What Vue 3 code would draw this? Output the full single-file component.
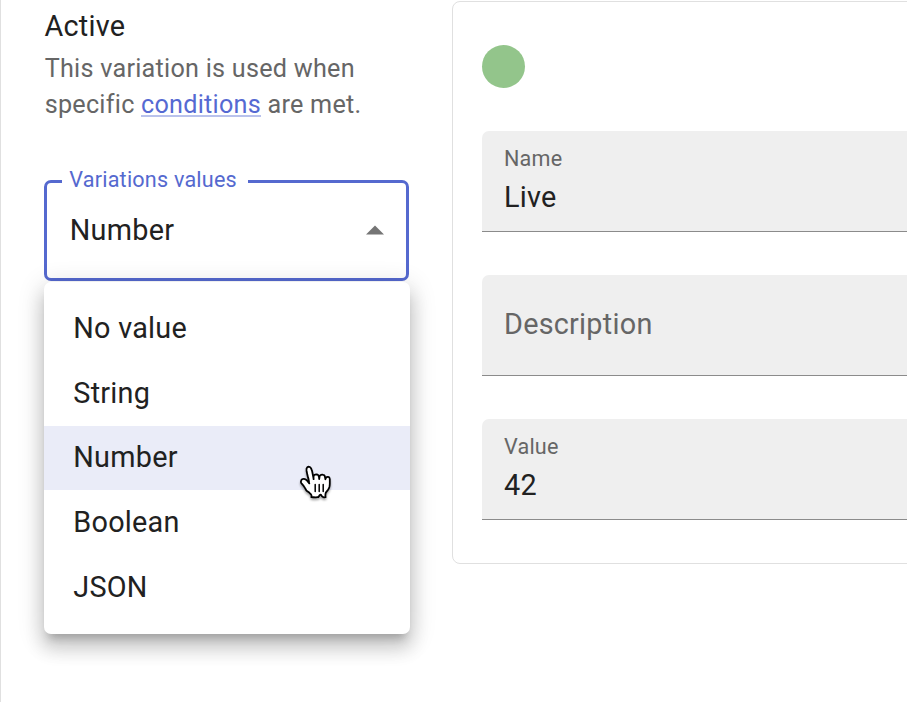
<script setup>
const options = ['No value', 'String', 'Number', 'Boolean', 'JSON']
const selected = 'Number'
</script>

<template>
  <main class="page">
    <section class="side">
      <h1>Active</h1>
      <p>This variation is used when<br />specific <a>conditions</a> are met.</p>
      <fieldset class="select">
        <legend>Variations values</legend>
        <span class="current">{{ selected }}</span>
        <svg class="arrow" width="18" height="10" viewBox="0 0 18 10"><path d="M0 9.5L9 0.5L18 9.5Z" fill="#757575" /></svg>
      </fieldset>
      <div class="menu">
        <ul>
          <li v-for="o in options" :key="o" :class="{ active: o === selected }">{{ o }}</li>
        </ul>
        <svg class="cursor" width="64" height="64" viewBox="0 0 32 32">
          <path d="M11.3 20.4c-.3-.4-.6-1.1-1.2-2c-.3-.5-1.2-1.5-1.5-1.9c-.2-.4-.2-.6-.1-1c.1-.6.7-1.1 1.4-1.1c.5 0 1 .4 1.4.7c.2.2.5.6.7.8c.2.2.2.3.4.5c.2.3.3.5.2.1c-.1-.5-.2-1.3-.4-2.1c-.1-.6-.2-.7-.3-1.1c-.1-.5-.2-.8-.3-1.3c-.1-.3-.2-1.1-.3-1.5c-.1-.5-.1-1.4.3-1.8c.3-.3.9-.4 1.3-.2c.5.3.8 1 .9 1.3c.2.5.4 1.2.5 2c.2 1 .5 2.5.5 2.8c0-.4-.1-1.1 0-1.5c.1-.3.3-.7.7-.8c.3-.1.6-.1.9-.1c.3.1.6.3.8.5c.4.6.4 1.9.4 1.8c.1-.4.1-1.2.3-1.6c.1-.2.5-.4.7-.5c.3-.1.7-.1 1 0c.2 0 .6.3.7.5c.2.3.3 1.3.4 1.7c0 .1.1-.4.3-.7c.4-.6 1.8-.8 1.9.6v2.3c0 .4-.1 1.3-.2 1.7c-.1.3-.4 1-.7 1.4c0 0-1.1 1.2-1.2 1.8c-.1.6-.1.6-.1 1c0 .4.1.9.1.9s-.8.1-1.2 0c-.4-.1-.9-.8-1-1.1c-.2-.3-.5-.3-.7 0c-.2.4-.7 1.1-1.1 1.1c-.7.1-2.1 0-3.1 0c0 0 .2-1-.2-1.4c-.3-.3-.8-.8-1.1-1.1Z" fill="#fff" stroke="#000" stroke-width=".9" stroke-linejoin="round" />
          <path d="M15.6 17.3V20.8M17.6 17.3V20.8M19.6 17.3V20.8" stroke="#000" stroke-width=".75" stroke-linecap="round" />
        </svg>
      </div>
    </section>
    <section class="card">
      <div class="dot"></div>
      <div class="field"><label>Name</label><span>Live</span></div>
      <div class="field empty"><span>Description</span></div>
      <div class="field"><label>Value</label><span>42</span></div>
    </section>
  </main>
</template>

<style>
body { margin: 0; overflow: hidden; background: #fff; }
</style>
<style scoped>
* { box-sizing: border-box; }
.page { width: 907px; height: 702px; display: flex; border-left: 1px solid #e0e0e0; font-family: Roboto, sans-serif; overflow: hidden; color: #212121; }
.side { width: 451px; padding: 8px 0 0 43px; flex: none; }
h1 { margin: 0; padding-left: .5px; font-size: 28.8px; line-height: 37px; font-weight: 400; letter-spacing: .25px; }
p { margin: 6px 0 0 .7px; font-size: 25.2px; line-height: 36px; letter-spacing: .25px; color: #666; white-space: nowrap; }
a { color: #5569d2; background: linear-gradient(#b9c2ec, #b9c2ec) 0 25px / 100% 2px no-repeat; }
.select { width: 365px; height: 113px; margin: 45px 0 0; border: 3px solid #5569cf; border-radius: 7px; padding: 0 21.8px 13px 22.8px; display: flex; align-items: center; justify-content: space-between; }
legend { height: 26px; margin-left: -8px; padding: 0 11px 0 7.5px; font-size: 21.6px; line-height: 24px; letter-spacing: .2px; color: #5569cf; }
.current { font-size: 28.8px; letter-spacing: .25px; }
.arrow { display: block; }
.menu { position: relative; width: 366px; height: 352px; margin-top: 1px; padding-top: 14px; border-radius: 7px; background: #fff; box-shadow: 0 9px 9px -5px rgba(0,0,0,.2), 0 14px 18px 2px rgba(0,0,0,.14), 0 5px 25px 4px rgba(0,0,0,.12); }
ul { list-style: none; margin: 0; padding: 0; }
li { height: 64.8px; padding-left: 29.3px; line-height: 65.2px; font-size: 28.8px; letter-spacing: .25px; }
.active { background: #eaecf8; line-height: 63.6px; }
.cursor { position: absolute; left: 239.5px; top: 167.5px; filter: drop-shadow(0 2px 1px rgba(0,0,0,.35)); }
.card { width: 480px; height: 563px; margin-top: 1px; padding: 43px 0 0 29px; border: 1px solid #e0e0e0; border-radius: 8px; flex: none; }
.dot { width: 43px; height: 43px; border-radius: 50%; background: #93c58b; margin-bottom: 43px; }
.field { height: 101px; margin-bottom: 43px; padding: 13px 22px 11px; background: #efefef; border-bottom: 1px solid #8b8b8b; border-radius: 7px 7px 0 0; display: flex; flex-direction: column; }
label { font-size: 21.6px; line-height: 30px; letter-spacing: .2px; color: #666; }
.field span { font-size: 28.8px; line-height: 47px; letter-spacing: .25px; }
.field.empty { justify-content: center; padding: 11px 22px 13px; color: #666; }
</style>
